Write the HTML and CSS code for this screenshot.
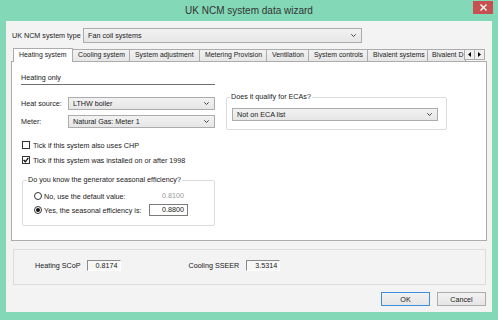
FILE: index.html
```html
<!DOCTYPE html>
<html lang="en">
<head>
  <meta charset="UTF-8" />
  <title>UK NCM system data wizard</title>
  <link rel="stylesheet" href="styles.css">
</head>
<body>
  <div class="window">
    <div class="titlebar">
      <span class="title">UK NCM system data wizard</span>
      <div class="close">
        <svg width="7" height="7" viewBox="0 0 7 7"><path d="M0.5 0.5 L6.5 6.5 M6.5 0.5 L0.5 6.5" stroke="#fff" stroke-width="1.4" /></svg>
      </div>
    </div>

    <div class="client">
      <div class="type-row">
        <span class="type-label">UK NCM system type</span>
        <div class="combo combo-type">
          <span>Fan coil systems</span>
          <svg class="chev" width="5" height="3" viewBox="0 0 5 3"><polyline points="0.3,0.3 2.5,2.5 4.7,0.3" fill="none" stroke="#444" stroke-width="1" /></svg>
        </div>
      </div>

      <div class="tabs">
        <div class="tab-list">
          <div class="tab active">Heating system</div>
          <div class="tab">Cooling system</div>
          <div class="tab">System adjustment</div>
          <div class="tab">Metering Provision</div>
          <div class="tab">Ventilation</div>
          <div class="tab">System controls</div>
          <div class="tab">Bivalent systems</div>
          <div class="tab">Bivalent D</div>
        </div>
        <div class="tab-arrows">
          <span class="arrow"><svg width="3" height="5" viewBox="0 0 3 5"><polygon points="3,0 0,2.5 3,5" fill="#000" /></svg></span>
          <span class="arrow"><svg width="3" height="5" viewBox="0 0 3 5"><polygon points="0,0 3,2.5 0,5" fill="#000" /></svg></span>
        </div>
      </div>

      <div class="panel">
        <div class="col-left">
          <div class="heading">Heating only</div>

          <div class="field-row first">
            <span class="field-label">Heat source:</span>
            <div class="combo combo-field">
              <span>LTHW boiler</span>
              <svg class="chev" width="5" height="3" viewBox="0 0 5 3"><polyline points="0.3,0.3 2.5,2.5 4.7,0.3" fill="none" stroke="#444" stroke-width="1" /></svg>
            </div>
          </div>
          <div class="field-row">
            <span class="field-label">Meter:</span>
            <div class="combo combo-field">
              <span>Natural Gas: Meter 1</span>
              <svg class="chev" width="5" height="3" viewBox="0 0 5 3"><polyline points="0.3,0.3 2.5,2.5 4.7,0.3" fill="none" stroke="#444" stroke-width="1" /></svg>
            </div>
          </div>

          <div class="check-row first">
            <span class="checkbox"></span>
            <span>Tick if this system also uses CHP</span>
          </div>
          <div class="check-row">
            <span class="checkbox">
              <svg width="6" height="6" viewBox="0 0 6 6"><path d="M0.6 3 L2.3 4.8 L5.4 0.8" fill="none" stroke="#111" stroke-width="1.3" /></svg>
            </span>
            <span>Tick if this system was installed on or after 1998</span>
          </div>

          <fieldset class="group group-eff">
            <legend>Do you know the generator seasonal efficiency?</legend>
            <div class="group-body">
              <div class="radio-row">
                <span class="radio"></span>
                <span class="radio-text">No, use the default value:</span>
                <span class="value muted">0.8100</span>
              </div>
              <div class="radio-row second">
                <span class="radio checked"></span>
                <span class="radio-text">Yes, the seasonal efficiency is:</span>
                <span class="value input">0.8800</span>
              </div>
            </div>
          </fieldset>
        </div>

        <div class="col-right">
          <fieldset class="group group-eca">
            <legend>Does it qualify for ECAs?</legend>
            <div class="group-body">
              <div class="combo combo-eca">
                <span>Not on ECA list</span>
                <svg class="chev" width="5" height="3" viewBox="0 0 5 3"><polyline points="0.3,0.3 2.5,2.5 4.7,0.3" fill="none" stroke="#444" stroke-width="1" /></svg>
              </div>
            </div>
          </fieldset>
        </div>
      </div>

      <div class="results">
        <span class="result-label">Heating SCoP</span>
        <span class="result-box">0.8174</span>
        <span class="result-label cooling">Cooling SSEER</span>
        <span class="result-box">3.5314</span>
      </div>

      <div class="buttons">
        <button class="btn default">OK</button>
        <button class="btn">Cancel</button>
      </div>
    </div>
  </div>
</body>
</html>
```

FILE: styles.css
```css
body {
  margin: 0;
  background-color: #83d8b7;
  font-family: "Liberation Sans", Arial, sans-serif;
  font-size: 7.2px;
  color: #1a1a1a;
}

.window {
  width: 498px;
  height: 320px;
}

.titlebar {
  position: relative;
  height: 21px;
  line-height: 21px;
  text-align: center;
}

.title {
  font-size: 10px;
  color: #333;
}

.close {
  position: absolute;
  top: 1px;
  right: 5px;
  width: 20px;
  height: 13px;
  background-color: #c75050;
  display: flex;
  align-items: center;
  justify-content: center;
}

.client {
  margin: 0 6px;
  height: 291px;
  box-sizing: border-box;
  padding: 7px 6px 6px 6px;
  background-color: #f3f3f3;
  display: flex;
  flex-direction: column;
}

/* system type row */
.type-row {
  display: flex;
  align-items: center;
  height: 14px;
}

.type-label {
  width: 71px;
}

.combo {
  display: flex;
  align-items: center;
  justify-content: space-between;
  box-sizing: border-box;
  border: 1px solid #acacac;
  background: linear-gradient(#f2f2f2, #e6e6e6);
  padding: 0 5px 0 4px;
}

.combo-type {
  width: 279px;
  height: 15px;
}

.chev {
  display: block;
}

/* tabs */
.tabs {
  display: flex;
  align-items: flex-end;
  height: 14px;
  margin-top: 6px;
  margin-bottom: -1px;
  padding-left: 1px;
  position: relative;
  z-index: 1;
}

.tab-list {
  display: flex;
  align-items: flex-end;
  width: 451px;
  height: 14px;
}

.tab {
  flex: none;
  box-sizing: border-box;
  height: 12px;
  line-height: 10px;
  margin-left: -1px;
  margin-bottom: 1px;
  padding-left: 5px;
  border: 1px solid #acacac;
  border-bottom: none;
  background: linear-gradient(#f2f2f2, #e6e6e6);
  font-size: 6.9px;
  white-space: nowrap;
}

.tab:first-child {
  margin-left: 0;
}

.tab.active {
  height: 14px;
  margin-bottom: 0;
  padding-bottom: 2px;
  background: #fff;
  line-height: 11px;
}

.tab:nth-child(1) { width: 60px; }
.tab:nth-child(2) { width: 58px; }
.tab:nth-child(3) { width: 71px; }
.tab:nth-child(4) { width: 68px; }
.tab:nth-child(5) { width: 43px; }
.tab:nth-child(6) { width: 60px; }
.tab:nth-child(7) { width: 61px; }
.tab:nth-child(8) { width: 39px; padding-left: 4px; }

.tab-arrows {
  display: flex;
  margin-bottom: 2px;
}

.arrow {
  box-sizing: border-box;
  width: 11px;
  height: 11px;
  border: 1px solid #acacac;
  background: #f0f0f0;
  display: flex;
  align-items: center;
  justify-content: center;
}

.arrow + .arrow {
  margin-left: -1px;
}

/* tab page */
.panel {
  display: flex;
  align-items: flex-start;
  box-sizing: border-box;
  height: 181px;
  margin: 0 -1px;
  padding: 11px 0 0 9px;
  border: 1px solid #acacac;
  background: #fff;
}

.col-left {
  width: 194px;
}

.heading {
  height: 10px;
  line-height: 10px;
  padding-bottom: 1px;
  border-bottom: 1px solid #707070;
}

.field-row {
  display: flex;
  align-items: center;
  margin-top: 5px;
}

.field-row.first {
  margin-top: 12px;
}

.field-label {
  width: 47px;
}

.combo-field {
  width: 147px;
  height: 13px;
}

.check-row {
  display: flex;
  align-items: center;
  height: 12px;
  margin-top: 3px;
  padding-left: 1px;
}

.check-row.first {
  margin-top: 11px;
}

.checkbox {
  box-sizing: border-box;
  width: 8px;
  height: 8px;
  margin-right: 3px;
  border: 1px solid #333;
  background: #fff;
  display: flex;
  align-items: center;
  justify-content: center;
}

.group {
  margin: 0;
  padding: 0;
  box-sizing: border-box;
  border: 1px solid #dcdcdc;
  border-radius: 2px;
}

.group legend {
  height: 10px;
  line-height: 10px;
  padding: 0 1px;
}

.group-eff {
  width: 193px;
  margin: 9px 0 0 1px;
}

.group-eff legend {
  margin-left: 4px;
}

.group-eff .group-body {
  padding: 5px 26px 9px 11px;
}

.radio-row {
  display: flex;
  align-items: center;
  height: 12px;
}

.radio-row.second {
  margin-top: 2px;
}

.radio {
  box-sizing: border-box;
  width: 8px;
  height: 8px;
  margin-right: 2px;
  border: 1px solid #333;
  border-radius: 50%;
  background: #fff;
  display: flex;
  align-items: center;
  justify-content: center;
}

.radio.checked::after {
  content: "";
  width: 4px;
  height: 4px;
  border-radius: 50%;
  background: #111;
}

.radio-text {
  flex: 1;
}

.value {
  box-sizing: border-box;
  width: 39px;
  height: 12px;
  line-height: 10px;
  padding-right: 3px;
  text-align: right;
}

.value.muted {
  color: #9a9a9a;
  border: 1px solid transparent;
}

.value.input {
  border: 1px solid #7a7a7a;
  background: #fff;
}

.col-right {
  margin: 19px 0 0 11px;
}

.group-eca {
  width: 221px;
}

.group-eca legend {
  margin-left: 3px;
}

.group-eca .group-body {
  padding: 6px 8px 8px 5px;
}

.combo-eca {
  width: 206px;
  height: 13px;
}

/* results */
.results {
  display: flex;
  align-items: center;
  box-sizing: border-box;
  height: 36px;
  margin: 8px 0 0 1px;
  padding: 0 0 3px 21px;
  width: 473px;
  border: 1px solid #dcdcdc;
}

.result-label {
  margin-right: 6px;
}

.result-label.cooling {
  margin-left: 68px;
  margin-right: 7px;
}

.result-box {
  box-sizing: border-box;
  width: 34px;
  height: 11px;
  line-height: 9px;
  padding-right: 2px;
  text-align: right;
  border: 1px solid #fff;
  border-top-color: #8a8a8a;
  border-left-color: #8a8a8a;
  background: #f7f7f7;
}

/* dialog buttons */
.buttons {
  display: flex;
  justify-content: flex-end;
  gap: 7px;
  margin-top: 7px;
}

.btn {
  box-sizing: border-box;
  width: 49px;
  height: 14px;
  padding: 0;
  font-family: inherit;
  font-size: 7.2px;
  color: #1a1a1a;
  border: 1px solid #acacac;
  border-radius: 0;
  background: linear-gradient(#f2f2f2, #e5e5e5);
}

.btn.default {
  border-color: #3c8fdc;
}
```
